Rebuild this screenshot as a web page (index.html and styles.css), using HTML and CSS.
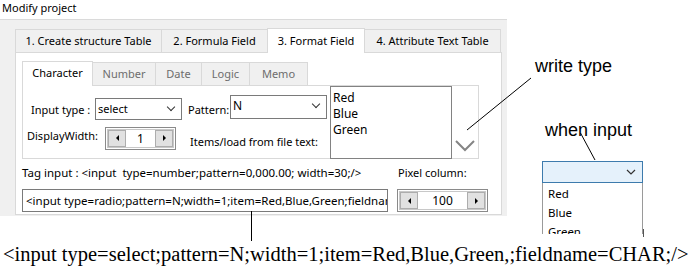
FILE: index.html
```html
<!DOCTYPE html>
<html>
<head>
	<title>Modify project</title>
	<link rel="stylesheet" href="styles.css">
</head>
<body>
	<div class="page">
		<div class="top">
			<div class="window">
				<div class="title">Modify project</div>
				<div class="dialog">
					<div class="tabs">
						<div class="tab t1">1. Create structure Table</div>
						<div class="tab t2">2. Formula Field</div>
						<div class="tab t3 active">3. Format Field</div>
						<div class="tab t4">4. Attribute Text Table</div>
					</div>
					<div class="panel">
						<div class="subtabs">
							<div class="subtab s1 active">Character</div>
							<div class="subtab s2">Number</div>
							<div class="subtab s3">Date</div>
							<div class="subtab s4">Logic</div>
							<div class="subtab s5">Memo</div>
						</div>
						<div class="subpanel">
							<div class="fields">
								<div class="row row1">
									<span class="lbl-type">Input type :</span>
									<div class="combo select">select<span class="caret"></span></div>
									<span class="lbl-pattern">Pattern:</span>
									<div class="combo pattern">N<span class="caret"></span></div>
								</div>
								<div class="row row2">
									<span class="lbl-width">DisplayWidth:</span>
									<div class="spin small">
										<span class="btn"><span class="tri left"></span></span>
										<span class="val">1</span>
										<span class="btn"><span class="tri right"></span></span>
									</div>
									<span class="lbl-items">Items/load from file text:</span>
								</div>
							</div>
							<div class="listbox">
								<div>Red</div>
								<div>Blue</div>
								<div>Green</div>
							</div>
							<div class="more">
								<svg width="20" height="12" viewBox="0 0 20 12"><polyline points="1,1 10,10 19,1" fill="none" stroke="#858585" stroke-width="2"/></svg>
							</div>
						</div>
						<div class="tagrow">
							<span class="tag">Tag input : &lt;input&nbsp; type=number;pattern=0,000.00; width=30;/&gt;</span>
							<span class="pixel">Pixel column:</span>
						</div>
						<div class="inputrow">
							<div class="textbox">&lt;input type=radio;pattern=N;width=1;item=Red,Blue,Green;fieldname=CHAR;/&gt;</div>
							<div class="spin wide">
								<span class="btn"><span class="tri left"></span></span>
								<span class="val">100</span>
								<span class="btn"><span class="tri right"></span></span>
							</div>
						</div>
					</div>
				</div>
			</div>
			<div class="notes">
				<div class="note write">write type</div>
				<div class="note when">when input</div>
				<div class="drop">
					<svg width="10" height="6" viewBox="0 0 10 6"><polyline points="1,1 5,5 9,1" fill="none" stroke="#333" stroke-width="1.2"/></svg>
				</div>
				<div class="droplist">
					<div>Red</div>
					<div>Blue</div>
					<div>Green</div>
				</div>
			</div>
		</div>
		<div class="result">&lt;input type=select;pattern=N;width=1;item=Red,Blue,Green,;fieldname=CHAR;/&gt;</div>
		<svg class="lines" width="695" height="273" viewBox="0 0 695 273">
			<line x1="467" y1="130" x2="531" y2="78" stroke="#000" stroke-width="1"/>
			<line x1="580.5" y1="133" x2="595" y2="160" stroke="#000" stroke-width="1"/>
			<line x1="251.5" y1="211" x2="251.5" y2="241" stroke="#000" stroke-width="1"/>
			<line x1="643.5" y1="229" x2="643.5" y2="237" stroke="#555" stroke-width="1"/>
		</svg>
	</div>
</body>
</html>
```

FILE: styles.css
```css
* {
	box-sizing: border-box;
}
html, body {
	margin: 0;
	background-color: white;
}
.page {
	position: relative;
	width: 695px;
	height: 273px;
	overflow: hidden;
	font-family: 'Noto Sans', sans-serif;
	font-size: 11px;
	color: black;
}
.top {
	display: flex;
	height: 240px;
}
.window {
	width: 507px;
}
.title {
	height: 19px;
	line-height: 15px;
	padding-left: 2px;
}
.dialog {
	height: 197px;
	background-color: #f0f0f0;
	border-top: 1px solid #dadada;
	padding: 8px 0 0 15px;
}

/* outer tabs */
.tabs {
	display: flex;
	height: 24px;
}
.tab {
	margin-top: 1px;
	height: 23px;
	line-height: 21px;
	text-align: center;
	border: 1px solid #d9d9d9;
	border-bottom: none;
	border-left: none;
	background-color: #f0f0f0;
}
.t1 { width: 147px; border-left: 1px solid #d9d9d9; }
.t2 { width: 106px; }
.t3 { width: 98px; }
.t4 { width: 136px; }
.tab.active {
	margin-top: 0;
	height: 25px;
	line-height: 23px;
	background-color: white;
	border-left: 1px solid #d9d9d9;
	margin-left: -1px;
	position: relative;
	z-index: 1;
}
.panel {
	width: 487px;
	height: 163px;
	background-color: white;
	border: 1px solid #d9d9d9;
	padding: 8px 0 0 6px;
}

/* inner tabs */
.subtabs {
	display: flex;
	height: 24px;
}
.subtab {
	margin-top: 1px;
	height: 23px;
	line-height: 21px;
	text-align: center;
	color: #6d6d6d;
	background-color: #f0f0f0;
	border: 1px solid #d9d9d9;
	border-left: none;
	border-bottom: none;
}
.s1 { width: 71px; }
.s2 { width: 63px; }
.s3 { width: 46px; }
.s4 { width: 48px; }
.s5 { width: 58px; }
.subtab.active {
	margin-top: 0;
	height: 25px;
	color: black;
	background-color: white;
	border-left: 1px solid #d9d9d9;
	position: relative;
	z-index: 1;
}
.subpanel {
	display: flex;
	width: 457px;
	height: 74px;
	border: 1px solid #d9d9d9;
}
.fields {
	width: 307px;
}
.row {
	display: flex;
	align-items: center;
}
.row1 {
	height: 34px;
	padding-top: 8px;
}
.lbl-type {
	margin: 4px 0 0 8px;
	width: 64px;
}
.combo {
	position: relative;
	height: 22px;
	line-height: 20px;
	padding-left: 2px;
	border: 1px solid #7a7a7a;
	background-color: white;
}
.select {
	width: 87px;
	margin-top: 4px;
}
.pattern {
	width: 97px;
	height: 24px;
	font-size: 12px;
}
.caret {
	position: absolute;
	right: 7px;
	top: 5px;
	width: 6px;
	height: 6px;
	border-right: 1px solid #333;
	border-bottom: 1px solid #333;
	transform: rotate(45deg);
}
.lbl-pattern {
	margin: 4px 2px 0 6px;
	width: 40px;
}
.row2 {
	height: 30px;
	padding-top: 6px;
}
.lbl-width {
	margin: -6px 0 0 4px;
	width: 78px;
}
.lbl-items {
	margin: 6px 0 0 14px;
}

/* spinners */
.spin {
	display: flex;
	align-items: center;
	justify-content: space-between;
	height: 23px;
	padding: 0 2px;
	border: 1px solid #8a8a8a;
	outline: 1px solid #c8c8c8;
	outline-offset: -3px;
	background-color: white;
}
.small { width: 71px; }
.wide { width: 91px; }
.btn {
	display: flex;
	align-items: center;
	justify-content: center;
	width: 18px;
	height: 17px;
	background-color: #e1e1e1;
	border: 1px solid #adadad;
}
.val {
	font-size: 12px;
}
.tri {
	width: 0;
	height: 0;
	border-top: 3px solid transparent;
	border-bottom: 3px solid transparent;
}
.tri.left { border-right: 3px solid black; }
.tri.right { border-left: 3px solid black; }

.listbox {
	width: 122px;
	height: 73px;
	margin-left: 0;
	padding: 3px 0 0 2px;
	border: 1px solid #828282;
	font-size: 12px;
	line-height: 16px;
}
.more {
	display: flex;
	align-items: flex-end;
	padding: 0 0 6px 3px;
}
.tagrow {
	display: flex;
	height: 16px;
	margin-top: 6px;
	line-height: 16px;
}
.tag {
	width: 376px;
	font-size: 11.5px;
	white-space: nowrap;
}
.inputrow {
	display: flex;
	margin-top: 8px;
}
.textbox {
	width: 366px;
	height: 23px;
	line-height: 21px;
	padding-left: 3px;
	border: 1px solid #7a7a7a;
	font-size: 11.5px;
	white-space: nowrap;
	overflow: hidden;
}
.inputrow .spin {
	margin-left: 9px;
}

/* annotations */
.notes {
	flex: 1;
}
.note {
	font-family: 'Liberation Sans', sans-serif;
	font-size: 18px;
	line-height: 21px;
}
.write {
	margin: 56px 0 0 28px;
}
.when {
	margin: 43px 0 0 38px;
}
.drop {
	display: flex;
	align-items: center;
	justify-content: flex-end;
	width: 101px;
	height: 22px;
	margin: 20px 0 0 35px;
	padding-right: 6px;
	background-color: #e5f1fb;
	border: 1px solid #3d7bad;
}
.droplist {
	width: 101px;
	height: 51px;
	margin-left: 35px;
	padding: 1px 0 0 5px;
	overflow: hidden;
	border: 1px solid #9a9a9a;
	border-top: none;
	border-bottom: none;
	font-size: 11.5px;
	line-height: 19px;
}
.result {
	font-family: 'Liberation Serif', serif;
	font-size: 20.5px;
	line-height: 28px;
	padding-left: 3px;
	white-space: nowrap;
}
.lines {
	position: absolute;
	top: 0;
	left: 0;
	pointer-events: none;
}
```
